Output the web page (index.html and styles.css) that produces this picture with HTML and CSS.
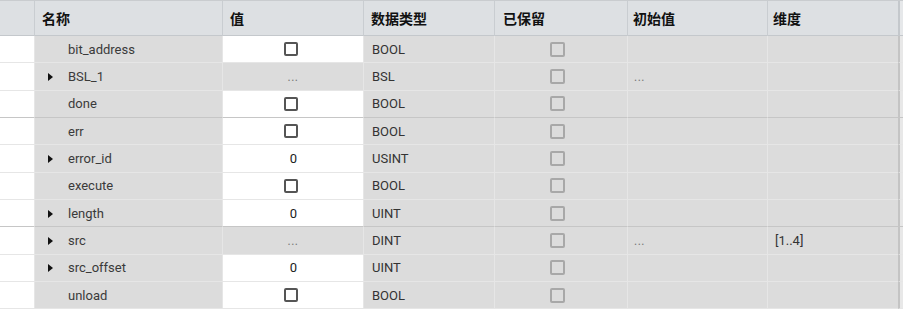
FILE: index.html
```html
<!DOCTYPE html>
<html lang="zh">
<head>
<meta charset="utf-8">
<title>变量表</title>
<link rel="stylesheet" href="styles.css">
</head>
<body>
<div class="table">
  <div class="row head">
    <div class="c c0"></div>
    <div class="c">名称</div>
    <div class="c">值</div>
    <div class="c">数据类型</div>
    <div class="c hx">已保留</div>
    <div class="c hy">初始值</div>
    <div class="c hy">维度</div>
    <div class="c edge"></div>
  </div>

  <div class="row">
    <div class="c c0"></div>
    <div class="c name"><span class="tri none"></span>bit_address</div>
    <div class="c val white"><span class="cb"></span></div>
    <div class="c type">BOOL</div>
    <div class="c ret"><span class="cb dis"></span></div>
    <div class="c init"></div>
    <div class="c dim"></div>
    <div class="c edge"></div>
  </div>
  <div class="row">
    <div class="c c0"></div>
    <div class="c name"><span class="tri"></span>BSL_1</div>
    <div class="c val"><span class="dots">...</span></div>
    <div class="c type">BSL</div>
    <div class="c ret"><span class="cb dis"></span></div>
    <div class="c init"><span class="dots">...</span></div>
    <div class="c dim"></div>
    <div class="c edge"></div>
  </div>
  <div class="row sep">
    <div class="c c0"></div>
    <div class="c name"><span class="tri none"></span>done</div>
    <div class="c val white"><span class="cb"></span></div>
    <div class="c type">BOOL</div>
    <div class="c ret"><span class="cb dis"></span></div>
    <div class="c init"></div>
    <div class="c dim"></div>
    <div class="c edge"></div>
  </div>

  <div class="row">
    <div class="c c0"></div>
    <div class="c name"><span class="tri none"></span>err</div>
    <div class="c val white"><span class="cb"></span></div>
    <div class="c type">BOOL</div>
    <div class="c ret"><span class="cb dis"></span></div>
    <div class="c init"></div>
    <div class="c dim"></div>
    <div class="c edge"></div>
  </div>
  <div class="row">
    <div class="c c0"></div>
    <div class="c name"><span class="tri"></span>error_id</div>
    <div class="c val white"><span class="num">0</span></div>
    <div class="c type">USINT</div>
    <div class="c ret"><span class="cb dis"></span></div>
    <div class="c init"></div>
    <div class="c dim"></div>
    <div class="c edge"></div>
  </div>
  <div class="row">
    <div class="c c0"></div>
    <div class="c name"><span class="tri none"></span>execute</div>
    <div class="c val white"><span class="cb"></span></div>
    <div class="c type">BOOL</div>
    <div class="c ret"><span class="cb dis"></span></div>
    <div class="c init"></div>
    <div class="c dim"></div>
    <div class="c edge"></div>
  </div>
  <div class="row sep">
    <div class="c c0"></div>
    <div class="c name"><span class="tri"></span>length</div>
    <div class="c val white"><span class="num">0</span></div>
    <div class="c type">UINT</div>
    <div class="c ret"><span class="cb dis"></span></div>
    <div class="c init"></div>
    <div class="c dim"></div>
    <div class="c edge"></div>
  </div>

  <div class="row">
    <div class="c c0"></div>
    <div class="c name"><span class="tri"></span>src</div>
    <div class="c val"><span class="dots">...</span></div>
    <div class="c type">DINT</div>
    <div class="c ret"><span class="cb dis"></span></div>
    <div class="c init"><span class="dots">...</span></div>
    <div class="c dim">[1..4]</div>
    <div class="c edge"></div>
  </div>
  <div class="row">
    <div class="c c0"></div>
    <div class="c name"><span class="tri"></span>src_offset</div>
    <div class="c val white"><span class="num">0</span></div>
    <div class="c type">UINT</div>
    <div class="c ret"><span class="cb dis"></span></div>
    <div class="c init"></div>
    <div class="c dim"></div>
    <div class="c edge"></div>
  </div>
  <div class="row">
    <div class="c c0"></div>
    <div class="c name"><span class="tri none"></span>unload</div>
    <div class="c val white"><span class="cb"></span></div>
    <div class="c type">BOOL</div>
    <div class="c ret"><span class="cb dis"></span></div>
    <div class="c init"></div>
    <div class="c dim"></div>
    <div class="c edge"></div>
  </div>
</div>
</body>
</html>
```
FILE: styles.css
```css
html, body {
  margin: 0;
  padding: 0;
  background: #ffffff;
}
body {
  width: 903px;
  height: 311px;
  overflow: hidden;
  font-family: Roboto, "Noto Sans CJK SC", sans-serif;
  font-size: 13px;
  color: #3a3a3a;
}
.table {
  display: flex;
  flex-direction: column;
}
.row {
  display: grid;
  grid-template-columns: 34px 188px 141px 131px 133px 140px 131px 5px;
  height: 27.33px;
  box-sizing: border-box;
}
.c {
  box-sizing: border-box;
  background: #dcdcdc;
  border-left: 1px solid #e6e6e6;
  border-bottom: 1px solid #e6e6e6;
  display: flex;
  align-items: center;
  white-space: nowrap;
  overflow: hidden;
}
.c0 {
  background: #ffffff;
  border-left: none;
  border-bottom-color: #e6e6e6;
}
.edge {
  background: #e8e8e8;
  border-left: 2px solid #c4c4c4;
}
.row.sep .c {
  border-bottom-color: #c6c6c6;
}

/* header */
.row.head {
  height: 36px;
  border-top: 1px solid #c9cccf;
}
.head .c {
  background: #dde0e3;
  border-left-color: #c9cdd1;
  border-bottom: 1px solid #c4c8cc;
  font-family: "Noto Sans CJK SC", sans-serif;
  font-size: 14px;
  font-weight: bold;
  color: #111111;
  padding-left: 7px;
  padding-bottom: 1px;
}
.head .c0 {
  padding: 0;
}
.head .hx {
  padding-left: 8px;
}
.head .hy {
  padding-left: 5px;
}
.head .edge {
  padding: 0;
  background: #e6e8ea;
  border-left: 2px solid #c4c8cc;
}

/* name column */
.name {
  padding-left: 13px;
  color: #3a3a3a;
}
.tri {
  width: 0;
  height: 0;
  border-top: 4px solid transparent;
  border-bottom: 4px solid transparent;
  border-left: 5px solid #111111;
  margin-right: 15px;
  margin-top: 1px;
}
.tri.none {
  border-left-color: transparent;
}

/* value column */
.val {
  justify-content: center;
}
.val.white {
  background: #ffffff;
}
.num {
  color: #222222;
  padding-left: 1px;
}
.dots {
  color: #777777;
  font-size: 12px;
  letter-spacing: 0.5px;
  margin-top: 1px;
}
.cb {
  display: block;
  width: 14px;
  height: 14px;
  box-sizing: border-box;
  border: 2px solid #555555;
  border-radius: 2px;
  margin-right: 5px;
  background: #ffffff;
}
.cb.dis {
  width: 15px;
  height: 15px;
  border-color: #a8a8a8;
  background: transparent;
  margin-right: 7px;
}

.type {
  padding-left: 8px;
  color: #333333;
}
.ret {
  justify-content: center;
}
.init {
  padding-left: 6px;
}
.dim {
  padding-left: 7px;
  color: #333333;
}
```
